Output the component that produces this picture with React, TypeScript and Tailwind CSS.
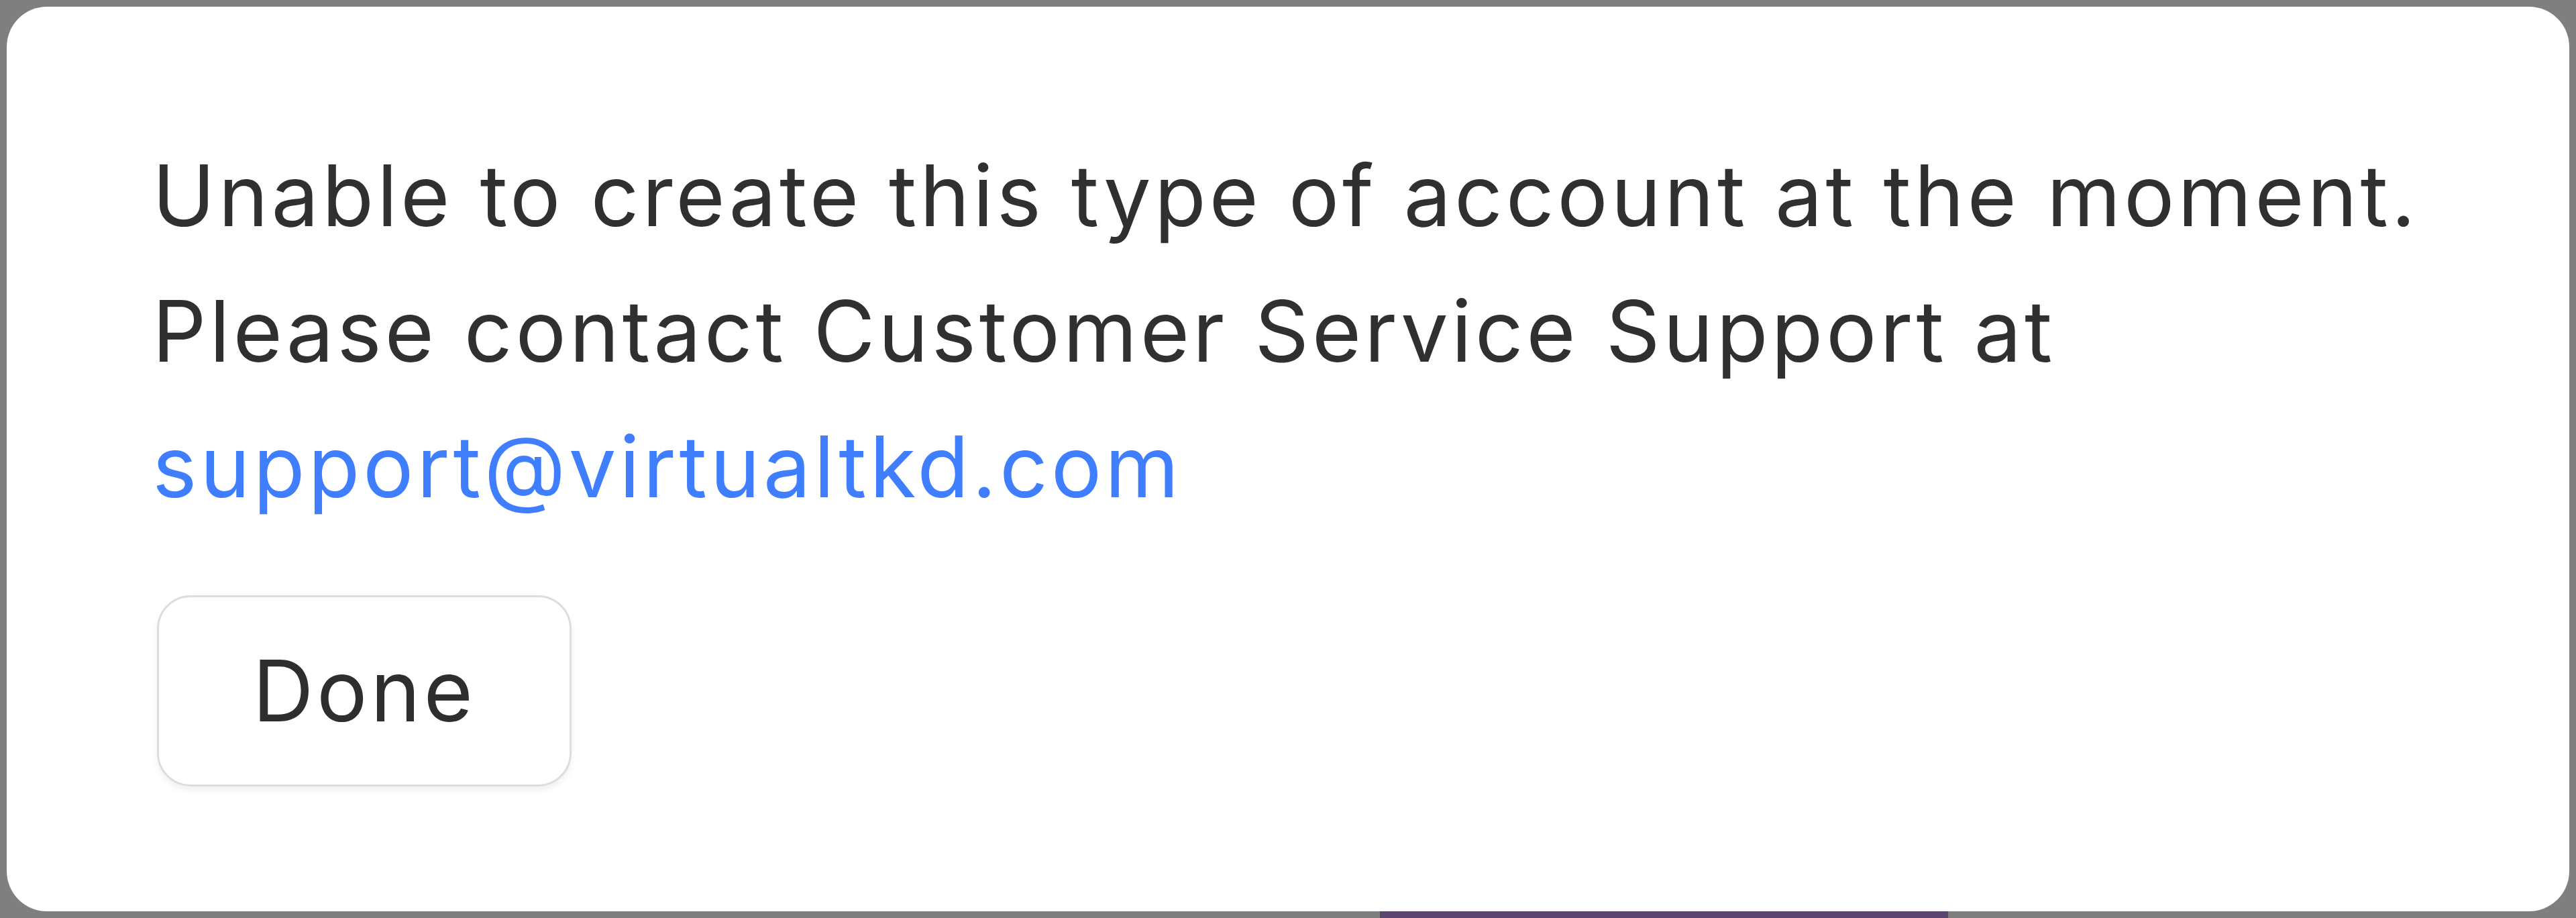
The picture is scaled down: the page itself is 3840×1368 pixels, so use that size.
import React from "react";

export default function App() {
  return (
    <div className="relative h-[1368px] w-full bg-[#7f7f7f] p-[10px]">
      {/* purple strip peeking under the sheet */}
      <div className="absolute bottom-0 left-[2057px] h-[10px] w-[847px] bg-[#5b4670]" />

      <div
        className="relative h-full w-full rounded-[60px] bg-white pl-[217px] pt-[180px] text-[#303030]"
        style={{ fontFamily: "Inter, 'Open Sans', sans-serif" }}
      >
        <p className="text-[126px] leading-[202px] tracking-[4.7px]">
          Unable to create this type of account at the moment.
          <br />
          Please contact Customer Service Support at
          <br />
          <a href="mailto:support@virtualtkd.com" className="text-[#3f7fff]">
            support@virtualtkd.com
          </a>
        </p>

        <button className="ml-[7px] mt-[91px] flex h-[285px] w-[618px] items-center justify-center rounded-[50px] border-[3px] border-[#dddddd] bg-white text-[126px] tracking-[4.7px] text-[#2e2e2e] shadow-[0_6px_10px_rgba(0,0,0,0.06)]">
          Done
        </button>
      </div>
    </div>
  );
}
